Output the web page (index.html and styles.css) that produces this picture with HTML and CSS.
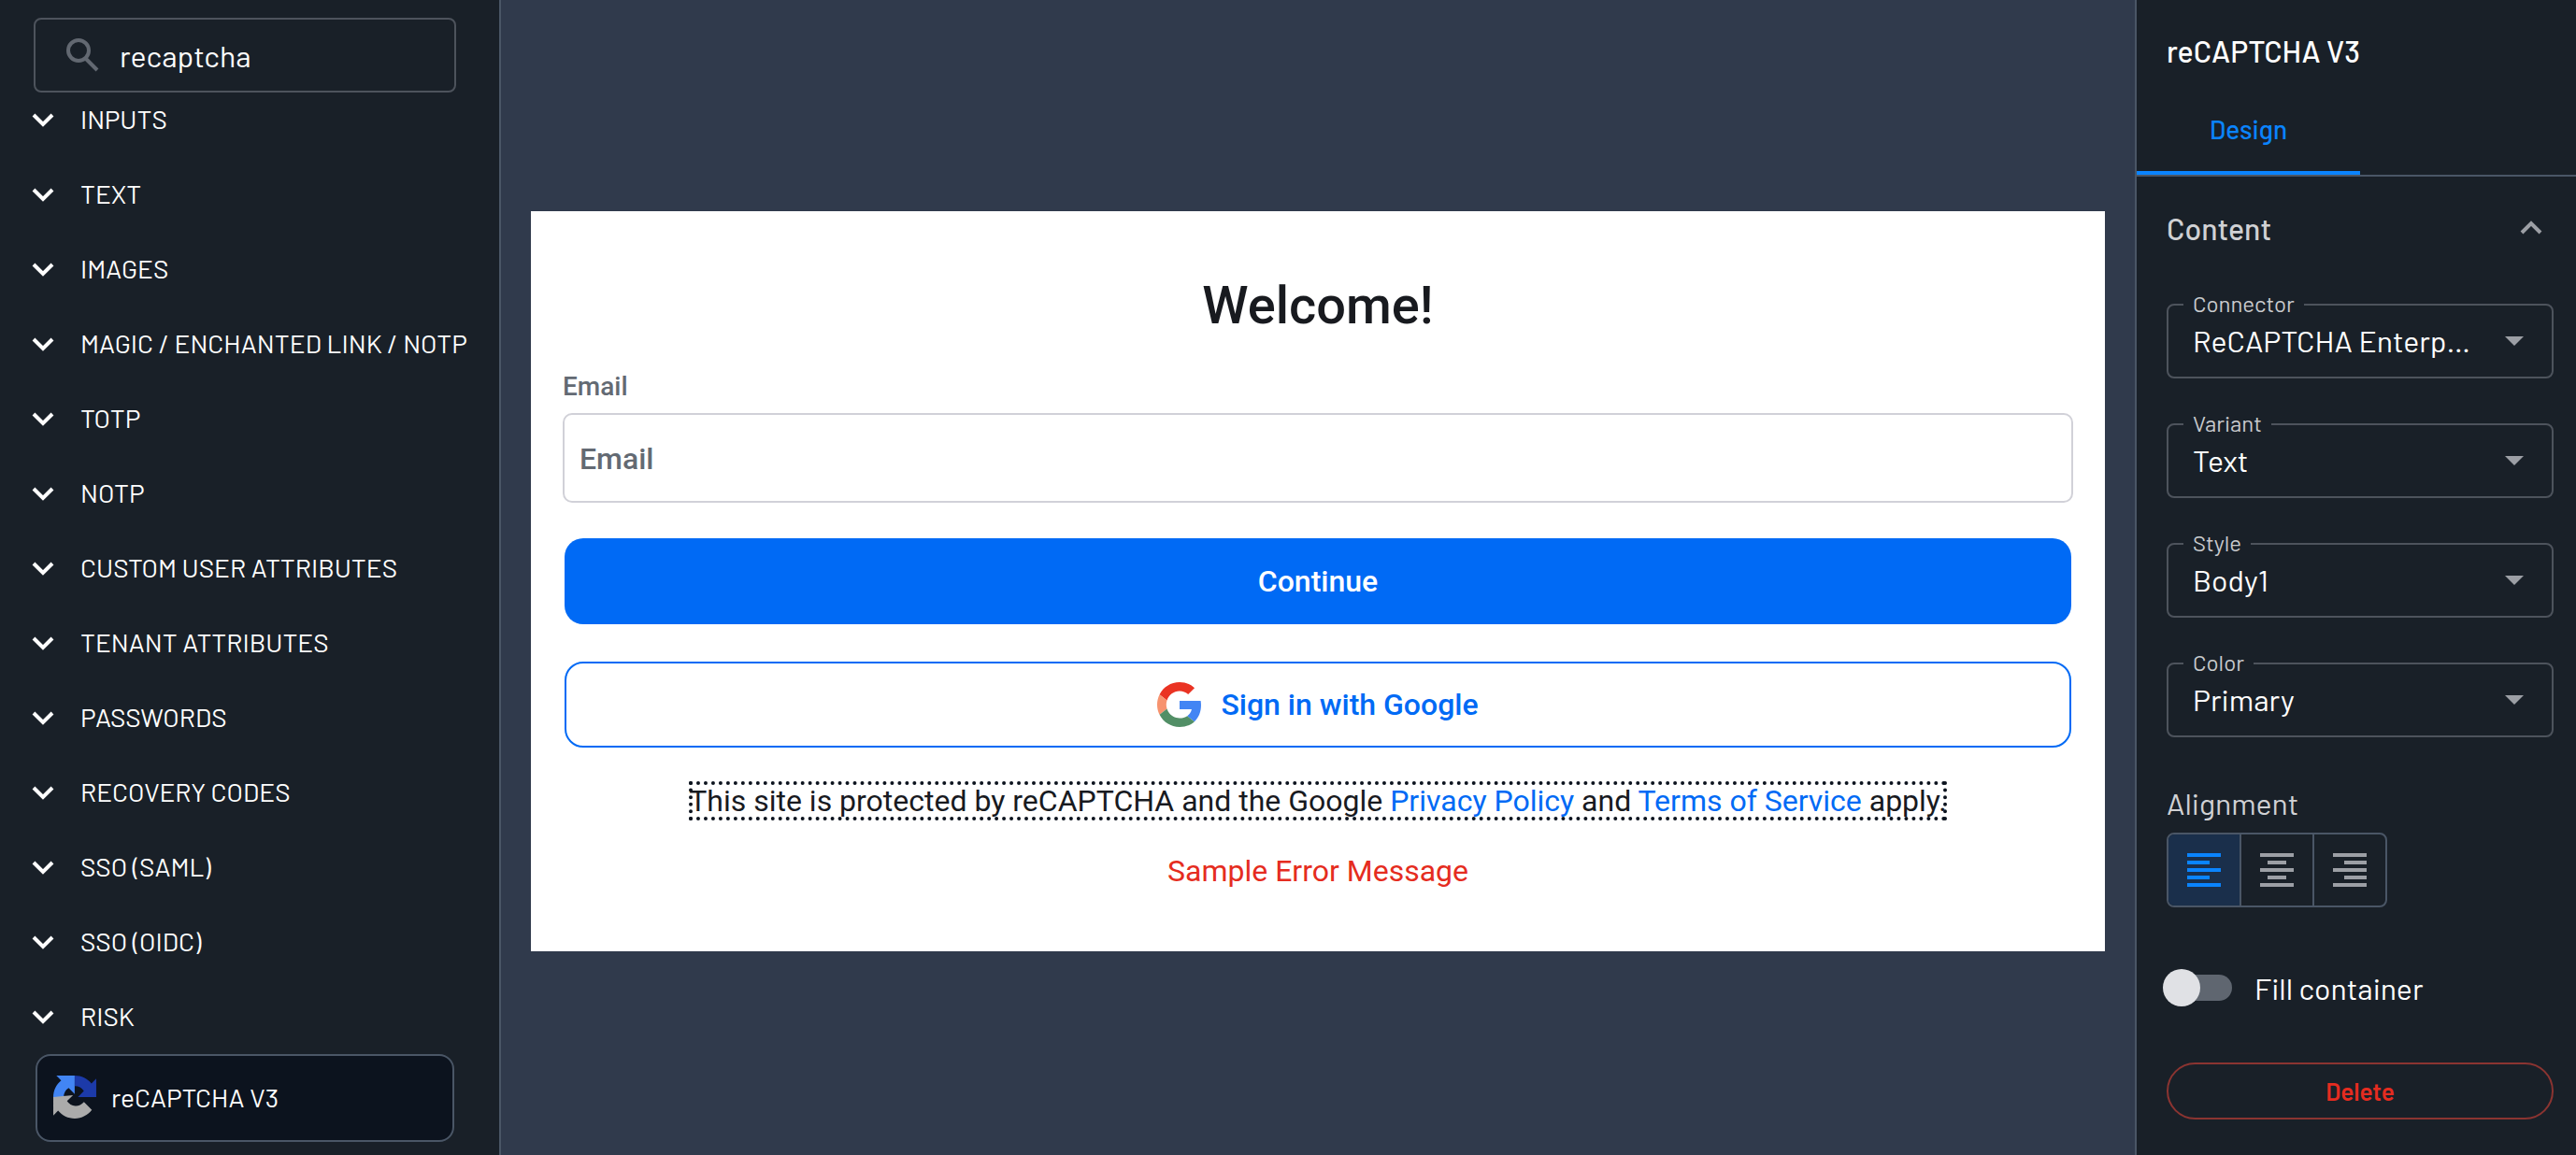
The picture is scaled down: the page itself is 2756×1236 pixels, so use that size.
FILE: index.html
```html
<!DOCTYPE html>
<html lang="en">

<head>
    <meta charset="UTF-8">
    <title>Screen editor</title>
    <link rel="stylesheet" href="styles.css">
</head>

<body>

    <div class="editor">

        <aside class="sidebar">
            <label class="search">
                <svg class="search-icon" viewBox="0 0 36 36" aria-hidden="true">
                    <circle cx="14" cy="13" r="11" />
                    <path d="M22 22 L34 34" />
                </svg>
                <input type="search" value="recaptcha" aria-label="Search components">
            </label>

            <nav class="groups">
                <button class="group" type="button"><svg class="chevron" viewBox="0 0 24 16"><path d="M2 3 L12 13 L22 3" /></svg>INPUTS</button>
                <button class="group" type="button"><svg class="chevron" viewBox="0 0 24 16"><path d="M2 3 L12 13 L22 3" /></svg>TEXT</button>
                <button class="group" type="button"><svg class="chevron" viewBox="0 0 24 16"><path d="M2 3 L12 13 L22 3" /></svg>IMAGES</button>
                <button class="group" type="button"><svg class="chevron" viewBox="0 0 24 16"><path d="M2 3 L12 13 L22 3" /></svg>MAGIC / ENCHANTED LINK / NOTP</button>
                <button class="group" type="button"><svg class="chevron" viewBox="0 0 24 16"><path d="M2 3 L12 13 L22 3" /></svg>TOTP</button>
                <button class="group" type="button"><svg class="chevron" viewBox="0 0 24 16"><path d="M2 3 L12 13 L22 3" /></svg>NOTP</button>
                <button class="group" type="button"><svg class="chevron" viewBox="0 0 24 16"><path d="M2 3 L12 13 L22 3" /></svg>CUSTOM USER ATTRIBUTES</button>
                <button class="group" type="button"><svg class="chevron" viewBox="0 0 24 16"><path d="M2 3 L12 13 L22 3" /></svg>TENANT ATTRIBUTES</button>
                <button class="group" type="button"><svg class="chevron" viewBox="0 0 24 16"><path d="M2 3 L12 13 L22 3" /></svg>PASSWORDS</button>
                <button class="group" type="button"><svg class="chevron" viewBox="0 0 24 16"><path d="M2 3 L12 13 L22 3" /></svg>RECOVERY CODES</button>
                <button class="group" type="button"><svg class="chevron" viewBox="0 0 24 16"><path d="M2 3 L12 13 L22 3" /></svg>SSO (SAML)</button>
                <button class="group" type="button"><svg class="chevron" viewBox="0 0 24 16"><path d="M2 3 L12 13 L22 3" /></svg>SSO (OIDC)</button>
                <button class="group" type="button"><svg class="chevron" viewBox="0 0 24 16"><path d="M2 3 L12 13 L22 3" /></svg>RISK</button>
            </nav>

            <button class="component" type="button">
                <svg class="recaptcha-icon" viewBox="0 0 64 64" aria-hidden="true">
                    <path fill="#1c3aa9" d="M64 31.955l-.033-1.37V4.687l-7.16 7.16C50.948 4.674 42.033.093 32.05.093V15.64a15.9 15.9 0 0 1 13.5 7.42l-8.9 8.9z" />
                    <path fill="#4285f4" d="M31.862.094l-1.37.033H4.594l7.16 7.16C4.58 13.147 0 22.06 0 32.046h15.5a15.9 15.9 0 0 1 7.42-13.5l8.9 8.9z" />
                    <path fill="#ababab" d="M.001 32.045l.033 1.37v25.898l7.16-7.16c5.86 7.173 14.774 11.754 24.76 11.754 10.4 0 19.622-4.96 25.467-12.638l-11.735-11.86a15.6 15.6 0 0 1-25.2-1.46l8.9-8.9z" />
                </svg>
                reCAPTCHA V3
            </button>
        </aside>

        <main class="canvas">
            <form class="screen">
                <h1>Welcome!</h1>
                <label class="email-label" for="email">Email</label>
                <input class="email" id="email" type="email" placeholder="Email">
                <button class="continue" type="button">Continue</button>
                <button class="google" type="button">
                    <svg class="google-icon" viewBox="0 0 48 48" aria-hidden="true">
                        <path fill="#ea3323" d="M24 9.500c3.540 0 6.710 1.220 9.210 3.600l6.850-6.850C35.900 2.380 30.470 0 24 0 14.620 0 6.510 5.380 2.560 13.220l7.980 6.190C12.430 13.720 17.740 9.500 24 9.500z" />
                        <path fill="#4285f4" d="M46.980 24.550c0-1.570-.15-3.090-.38-4.550H24v9.020h12.940c-.58 2.960-2.260 5.480-4.780 7.180l7.730 6c4.510-4.180 7.090-10.360 7.090-17.650z" />
                        <path fill="#f7936f" d="M10.530 28.590c-.48-1.450-.76-2.990-.76-4.590s.27-3.140.76-4.590l-7.980-6.190C.92 16.460 0 20.120 0 24c0 3.880.92 7.540 2.560 10.780l7.970-6.190z" />
                        <path fill="#528f66" d="M24 48c6.480 0 11.930-2.130 15.890-5.810l-7.730-6c-2.150 1.450-4.920 2.300-8.160 2.300-6.260 0-11.570-4.220-13.470-9.910l-7.980 6.190C6.510 42.620 14.620 48 24 48z" />
                    </svg>
                    Sign in with Google
                </button>
                <p class="notice">This site is protected by reCAPTCHA and the Google <a href="#">Privacy Policy</a> and <a href="#">Terms of Service</a> apply.</p>
                <p class="error">Sample Error Message</p>
            </form>
        </main>

        <aside class="inspector">
            <h2>reCAPTCHA V3</h2>
            <div class="tabs">
                <button class="tab" type="button">Design</button>
            </div>

            <div class="settings">
                <button class="section" type="button">
                    Content
                    <svg class="chevron" viewBox="0 0 24 16"><path d="M2 13 L12 3 L22 13" /></svg>
                </button>

                <fieldset class="field">
                    <legend><label for="connector">Connector</label></legend>
                    <select id="connector">
                        <option>ReCAPTCHA Enterprise</option>
                    </select>
                </fieldset>
                <fieldset class="field">
                    <legend><label for="variant">Variant</label></legend>
                    <select id="variant">
                        <option>Text</option>
                    </select>
                </fieldset>
                <fieldset class="field">
                    <legend><label for="style">Style</label></legend>
                    <select id="style">
                        <option>Body1</option>
                    </select>
                </fieldset>
                <fieldset class="field">
                    <legend><label for="color">Color</label></legend>
                    <select id="color">
                        <option>Primary</option>
                    </select>
                </fieldset>

                <h3>Alignment</h3>
                <div class="align">
                    <button class="active" type="button" aria-label="Align left">
                        <svg viewBox="0 0 36 36"><path d="M0 2h36M0 10h24M0 18h36M0 26h24M0 34h36" /></svg>
                    </button>
                    <button type="button" aria-label="Align center">
                        <svg viewBox="0 0 36 36"><path d="M0 2h36M8 10h20M0 18h36M8 26h20M0 34h36" /></svg>
                    </button>
                    <button type="button" aria-label="Align right">
                        <svg viewBox="0 0 36 36"><path d="M0 2h36M12 10h24M0 18h36M12 26h24M0 34h36" /></svg>
                    </button>
                </div>

                <label class="switch">
                    <input type="checkbox">
                    Fill container
                </label>

                <button class="delete" type="button">Delete</button>
            </div>
        </aside>

    </div>

</body>

</html>
```

FILE: styles.css
```css
* {
    box-sizing: border-box;
}

body {
    margin: 0;
    font-family: Barlow, Roboto, "Liberation Sans", sans-serif;
    color: #ffffff;
    background-color: #192028;
}

button,
input,
select {
    font: inherit;
    color: inherit;
    margin: 0;
}

button {
    background: none;
    border: none;
    padding: 0;
}

.editor {
    display: grid;
    grid-template-columns: 536px 1fr 472px;
    min-height: 100vh;
}

/* Left panel */
.sidebar {
    padding: 19px 46px 0 36px;
    border-right: 2px solid #4a5666;
}

.search {
    display: flex;
    align-items: center;
    gap: 22px;
    height: 80px;
    padding: 0 32px;
    border: 2px solid #4d535c;
    border-radius: 8px;
}

.search-icon {
    width: 36px;
    height: 36px;
    flex: none;
    fill: none;
    stroke: #626871;
    stroke-width: 4;
}

.search input {
    width: 100%;
    min-width: 0;
    padding: 0;
    border: none;
    outline: none;
    background: none;
    font-size: 32px;
    appearance: none;
}

.groups {
    display: flex;
    flex-direction: column;
    margin-top: -11px;
}

.group {
    display: flex;
    align-items: center;
    gap: 28px;
    height: 80px;
    padding-bottom: 2px;
    font-size: 28px;
    white-space: nowrap;
}

.chevron {
    width: 24px;
    height: 16px;
    flex: none;
    fill: none;
    stroke: #ffffff;
    stroke-width: 4;
}

.groups .chevron {
    margin: 2px 0 0 -2px;
}

.component {
    display: flex;
    align-items: center;
    gap: 16px;
    width: 448px;
    height: 94px;
    margin-left: 2px;
    padding: 0 17px 2px;
    border: 2px solid #4a5666;
    border-radius: 16px;
    background-color: #0c131e;
    font-size: 28px;
}

.recaptcha-icon {
    width: 46px;
    height: 46px;
}

/* Screen preview */
.canvas {
    display: flex;
    align-items: center;
    padding: 8px 32px 0;
    background-color: #303a4c;
}

.screen {
    display: flex;
    flex-direction: column;
    width: 100%;
    padding: 68px 34px 66px;
    background-color: #ffffff;
    color: #181a1f;
    font-family: Roboto, "Liberation Sans", sans-serif;
    font-size: 32px;
    line-height: 40px;
}

.screen h1 {
    margin: 0 0 36px;
    font-size: 56px;
    font-weight: 500;
    line-height: 66px;
    text-align: center;
}

.email-label {
    margin-bottom: 10px;
    color: #636a73;
    font-size: 28px;
    font-weight: 500;
    line-height: 36px;
}

.email {
    height: 96px;
    padding: 2px 16px 0;
    border: 2px solid #d1d1d8;
    border-radius: 10px;
    font-weight: 500;
}

.email::placeholder {
    color: #636a73;
    opacity: 1;
}

.continue,
.google {
    display: flex;
    align-items: center;
    justify-content: center;
    gap: 20px;
    height: 92px;
    margin: 38px 2px 0;
    border-radius: 20px;
    font-weight: 500;
}

.continue {
    background-color: #006af5;
    color: #ffffff;
}

.google {
    margin-top: 40px;
    border: 2px solid #006af5;
    color: #006af5;
}

.google-icon {
    width: 48px;
    height: 48px;
}

.notice {
    align-self: center;
    margin: 36px 0 0;
    line-height: 42px;
    outline: 4px dotted #0c131e;
    outline-offset: -4px;
}

.notice a {
    color: #006af5;
    text-decoration: none;
}

.error {
    margin: 34px 0 0;
    color: #e52c20;
    text-align: center;
}

/* Right panel */
.inspector {
    border-left: 2px solid #4a5666;
}

.inspector h2 {
    margin: 0;
    padding: 34px 32px 0;
    font-size: 32px;
    font-weight: 500;
    line-height: 40px;
}

.tabs {
    margin-top: 18px;
    border-bottom: 2px solid #4a5666;
}

.tab {
    display: block;
    width: 239px;
    height: 95px;
    border-bottom: 4px solid #0a84ff;
    color: #0a84ff;
    font-size: 28px;
    font-weight: 500;
}

.settings {
    display: flex;
    flex-direction: column;
    padding: 36px 24px 0 32px;
}

.section {
    display: flex;
    align-items: center;
    justify-content: space-between;
    height: 40px;
    margin: 0 12px 44px 0;
    padding-bottom: 2px;
    color: #d0d1d4;
    font-size: 32px;
    font-weight: 500;
}

.section .chevron {
    stroke: #9c9fa5;
}

.field {
    min-width: 0;
    height: 96px;
    margin: 0 0 32px;
    padding: 0 0 0 16px;
    border: 2px solid #4d535c;
    border-radius: 8px;
}

.field legend {
    padding: 0 10px 2px;
    color: #c8cacd;
    font-size: 24px;
    line-height: 32px;
}

.field select {
    width: 100%;
    height: 44px;
    padding: 0 82px 2px 10px;
    border: none;
    outline: none;
    appearance: none;
    font-size: 32px;
    text-overflow: ellipsis;
    background: url("data:image/svg+xml,%3Csvg xmlns='http://www.w3.org/2000/svg' width='20' height='10'%3E%3Cpath d='M0 0h20L10 10z' fill='%239c9fa5'/%3E%3C/svg%3E") no-repeat right 30px center;
}

.settings h3 {
    margin: 20px 0 14px;
    color: #d0d1d4;
    font-size: 32px;
    font-weight: 400;
    line-height: 36px;
}

.align {
    display: flex;
    align-self: flex-start;
    border: 2px solid #4a5666;
    border-radius: 8px;
    overflow: hidden;
}

.align button {
    display: flex;
    align-items: center;
    justify-content: center;
    width: 76px;
    height: 76px;
    color: #9c9fa5;
}

.align button + button {
    width: 78px;
    border-left: 2px solid #4a5666;
}

.align .active {
    background-color: #1a2f4b;
    color: #0a84ff;
}

.align svg {
    width: 36px;
    height: 36px;
    stroke: currentColor;
    stroke-width: 4;
}

.switch {
    display: flex;
    align-items: center;
    gap: 24px;
    height: 40px;
    margin-top: 66px;
    font-size: 32px;
}

.switch input {
    position: relative;
    width: 70px;
    height: 28px;
    border-radius: 14px;
    background-color: #5f6670;
    appearance: none;
}

/* The thumb is wider than the track and hangs over its edge */
.switch input::before {
    content: '';
    position: absolute;
    left: -4px;
    top: -6px;
    width: 40px;
    height: 40px;
    border-radius: 50%;
    background-color: #e0e1e5;
}

.delete {
    height: 61px;
    margin-top: 60px;
    border: 2px solid #8b3431;
    border-radius: 31px;
    color: #e52c20;
    font-size: 26px;
    font-weight: 600;
}
```
